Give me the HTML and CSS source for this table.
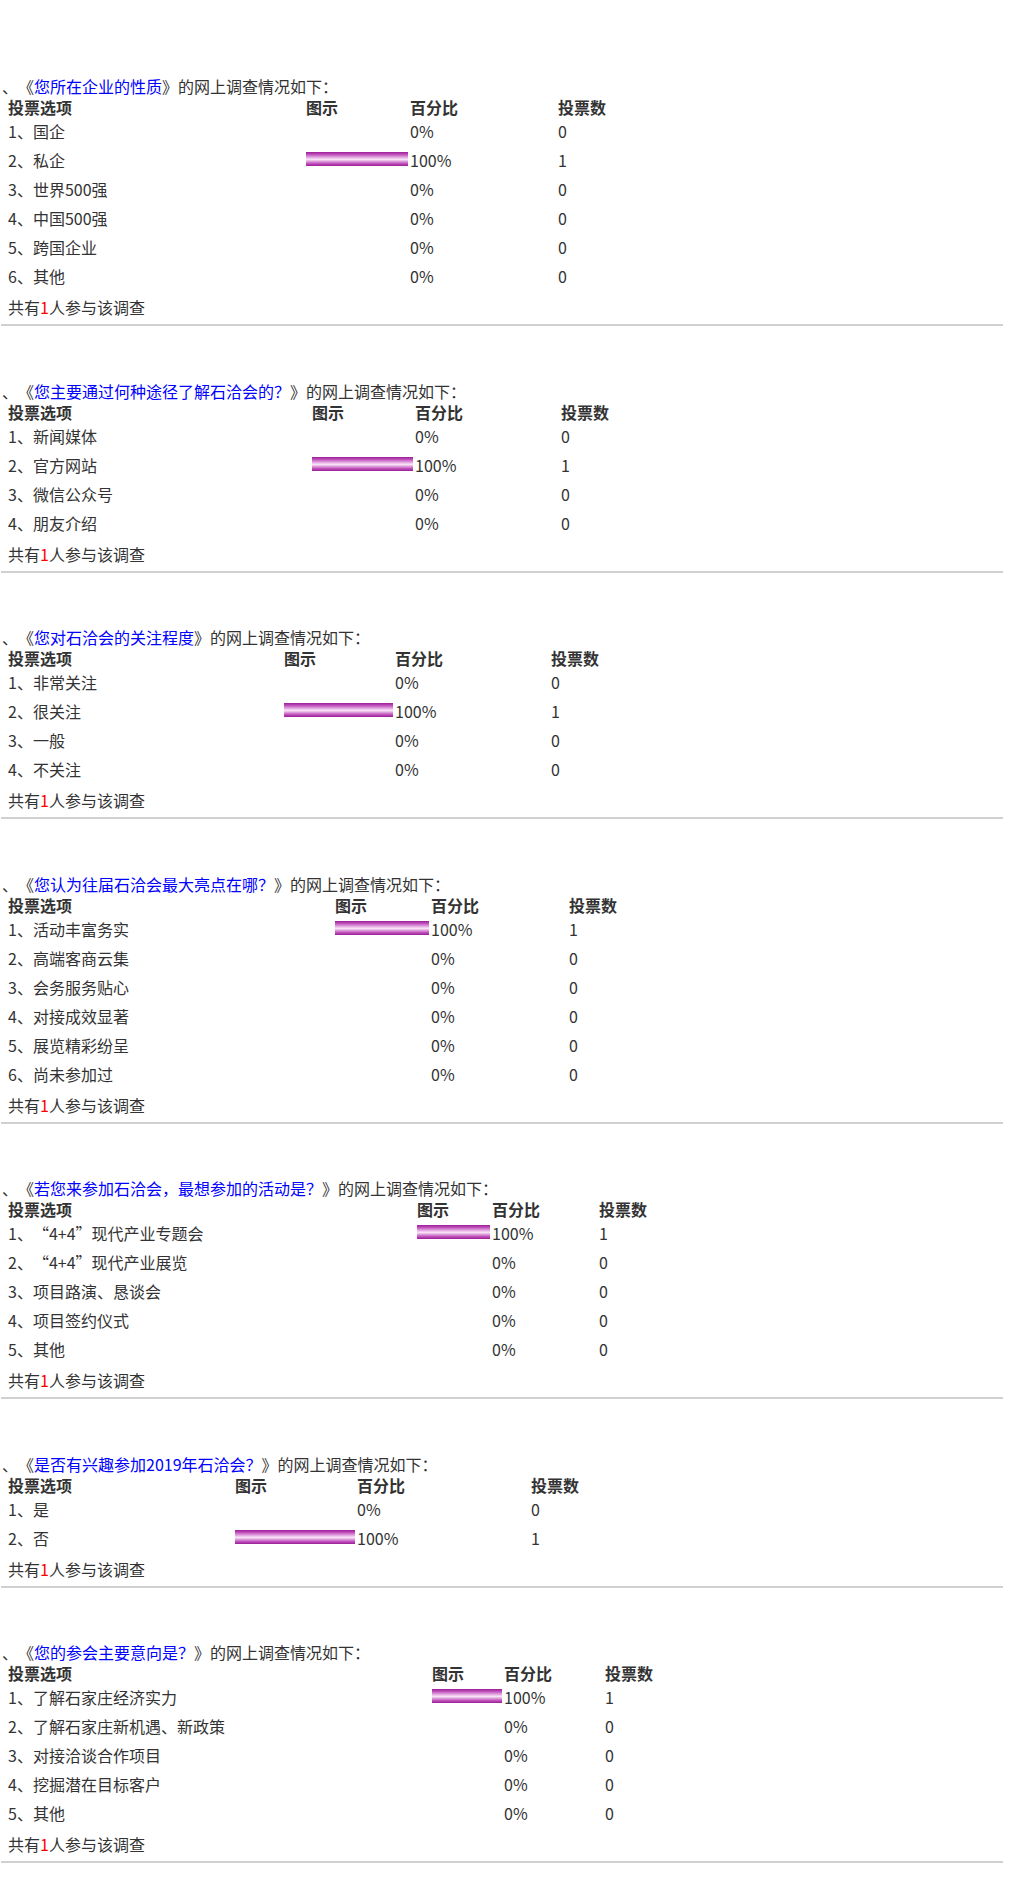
FILE: index.html
```html
<!DOCTYPE html>
<html lang="zh-CN">
<head>
  <meta charset="UTF-8" />
  <title>网上调查结果</title>
  <link rel="stylesheet" href="styles.css">
</head>
<body>

  <div class="survey">
    <p class="title">、《<a href="#">您所在企业的性质</a>》的网上调查情况如下：</p>
    <div class="poll q1">
      <div class="head">投票选项</div><div class="head">图示</div><div class="head">百分比</div><div class="head">投票数</div>
      <div>1、国企</div><div class="pic"></div><div>0%</div><div>0</div>
      <div>2、私企</div><div class="pic"><span class="bar" style="width:100%"></span></div><div>100%</div><div>1</div>
      <div>3、世界500强</div><div class="pic"></div><div>0%</div><div>0</div>
      <div>4、中国500强</div><div class="pic"></div><div>0%</div><div>0</div>
      <div>5、跨国企业</div><div class="pic"></div><div>0%</div><div>0</div>
      <div>6、其他</div><div class="pic"></div><div>0%</div><div>0</div>
    </div>
    <p class="total">共有<span class="num">1</span>人参与该调查</p>
  </div>

  <div class="survey">
    <p class="title">、《<a href="#">您主要通过何种途径了解石洽会的？</a>》的网上调查情况如下：</p>
    <div class="poll q2">
      <div class="head">投票选项</div><div class="head">图示</div><div class="head">百分比</div><div class="head">投票数</div>
      <div>1、新闻媒体</div><div class="pic"></div><div>0%</div><div>0</div>
      <div>2、官方网站</div><div class="pic"><span class="bar" style="width:100%"></span></div><div>100%</div><div>1</div>
      <div>3、微信公众号</div><div class="pic"></div><div>0%</div><div>0</div>
      <div>4、朋友介绍</div><div class="pic"></div><div>0%</div><div>0</div>
    </div>
    <p class="total">共有<span class="num">1</span>人参与该调查</p>
  </div>

  <div class="survey">
    <p class="title">、《<a href="#">您对石洽会的关注程度</a>》的网上调查情况如下：</p>
    <div class="poll q3">
      <div class="head">投票选项</div><div class="head">图示</div><div class="head">百分比</div><div class="head">投票数</div>
      <div>1、非常关注</div><div class="pic"></div><div>0%</div><div>0</div>
      <div>2、很关注</div><div class="pic"><span class="bar" style="width:100%"></span></div><div>100%</div><div>1</div>
      <div>3、一般</div><div class="pic"></div><div>0%</div><div>0</div>
      <div>4、不关注</div><div class="pic"></div><div>0%</div><div>0</div>
    </div>
    <p class="total">共有<span class="num">1</span>人参与该调查</p>
  </div>

  <div class="survey">
    <p class="title">、《<a href="#">您认为往届石洽会最大亮点在哪？</a>》的网上调查情况如下：</p>
    <div class="poll q4">
      <div class="head">投票选项</div><div class="head">图示</div><div class="head">百分比</div><div class="head">投票数</div>
      <div>1、活动丰富务实</div><div class="pic"><span class="bar" style="width:100%"></span></div><div>100%</div><div>1</div>
      <div>2、高端客商云集</div><div class="pic"></div><div>0%</div><div>0</div>
      <div>3、会务服务贴心</div><div class="pic"></div><div>0%</div><div>0</div>
      <div>4、对接成效显著</div><div class="pic"></div><div>0%</div><div>0</div>
      <div>5、展览精彩纷呈</div><div class="pic"></div><div>0%</div><div>0</div>
      <div>6、尚未参加过</div><div class="pic"></div><div>0%</div><div>0</div>
    </div>
    <p class="total">共有<span class="num">1</span>人参与该调查</p>
  </div>

  <div class="survey">
    <p class="title">、《<a href="#">若您来参加石洽会，最想参加的活动是？</a>》的网上调查情况如下：</p>
    <div class="poll q5">
      <div class="head">投票选项</div><div class="head">图示</div><div class="head">百分比</div><div class="head">投票数</div>
      <div>1、<span class="fw">“</span>4+4<span class="fw">”</span>现代产业专题会</div><div class="pic"><span class="bar" style="width:100%"></span></div><div>100%</div><div>1</div>
      <div>2、<span class="fw">“</span>4+4<span class="fw">”</span>现代产业展览</div><div class="pic"></div><div>0%</div><div>0</div>
      <div>3、项目路演、恳谈会</div><div class="pic"></div><div>0%</div><div>0</div>
      <div>4、项目签约仪式</div><div class="pic"></div><div>0%</div><div>0</div>
      <div>5、其他</div><div class="pic"></div><div>0%</div><div>0</div>
    </div>
    <p class="total">共有<span class="num">1</span>人参与该调查</p>
  </div>

  <div class="survey">
    <p class="title">、《<a href="#">是否有兴趣参加2019年石洽会？</a>》的网上调查情况如下：</p>
    <div class="poll q6">
      <div class="head">投票选项</div><div class="head">图示</div><div class="head">百分比</div><div class="head">投票数</div>
      <div>1、是</div><div class="pic"></div><div>0%</div><div>0</div>
      <div>2、否</div><div class="pic"><span class="bar" style="width:100%"></span></div><div>100%</div><div>1</div>
    </div>
    <p class="total">共有<span class="num">1</span>人参与该调查</p>
  </div>

  <div class="survey">
    <p class="title">、《<a href="#">您的参会主要意向是？</a>》的网上调查情况如下：</p>
    <div class="poll q7">
      <div class="head">投票选项</div><div class="head">图示</div><div class="head">百分比</div><div class="head">投票数</div>
      <div>1、了解石家庄经济实力</div><div class="pic"><span class="bar" style="width:100%"></span></div><div>100%</div><div>1</div>
      <div>2、了解石家庄新机遇、新政策</div><div class="pic"></div><div>0%</div><div>0</div>
      <div>3、对接洽谈合作项目</div><div class="pic"></div><div>0%</div><div>0</div>
      <div>4、挖掘潜在目标客户</div><div class="pic"></div><div>0%</div><div>0</div>
      <div>5、其他</div><div class="pic"></div><div>0%</div><div>0</div>
    </div>
    <p class="total">共有<span class="num">1</span>人参与该调查</p>
  </div>

</body>
</html>
```

FILE: styles.css
```css
body {
  margin: 0;
  padding-top: 21.5px;
  font-family: "Noto Sans CJK SC", "Noto Sans", sans-serif;
  font-size: 16px;
  color: #333;
  background: #fff;
  text-spacing-trim: space-all;
}

.survey {
  width: 1002px;
  margin-left: 1px;
  padding-top: 53.5px;
  border-bottom: 2px solid #d0d0d0;
}

.title {
  margin: 0;
  padding-left: 1px;
  line-height: 22px;
}

.title a {
  color: #00f;
  text-decoration: none;
}

/* result table: option / chart / percent / votes */
.poll {
  display: grid;
  grid-template-rows: 21px;
  grid-auto-rows: 29px;
  padding-left: 7px;
}

.poll > div {
  padding-top: 2px;
  line-height: 22px;
  white-space: nowrap;
}

.poll > .head {
  padding-top: 0;
  line-height: 21px;
  font-weight: bold;
}

.poll > .pic {
  padding: 5px 2px 0 0;
}

.bar {
  display: block;
  height: 14px;
  background: linear-gradient(#9c1e97, #b743b3 14%, #d584d2 30%, #efc9ee 46%, #f6e2f5 54%, #d584d2 72%, #b743b3 86%, #9c1e97);
}

.fw {
  font-feature-settings: "fwid";
}

.q1 { grid-template-columns: 298px 104px 148px 1fr; }
.q2 { grid-template-columns: 304px 103px 146px 1fr; }
.q3 { grid-template-columns: 276px 111px 156px 1fr; }
.q4 { grid-template-columns: 327px 96px 138px 1fr; }
.q5 { grid-template-columns: 409px 75px 107px 1fr; }
.q6 { grid-template-columns: 227px 122px 174px 1fr; }
.q7 { grid-template-columns: 424px 72px 101px 1fr; }

.total {
  margin: 0 0 6px;
  padding: 4px 0 0 7px;
  line-height: 22px;
}

.num {
  color: #f00;
}
```
